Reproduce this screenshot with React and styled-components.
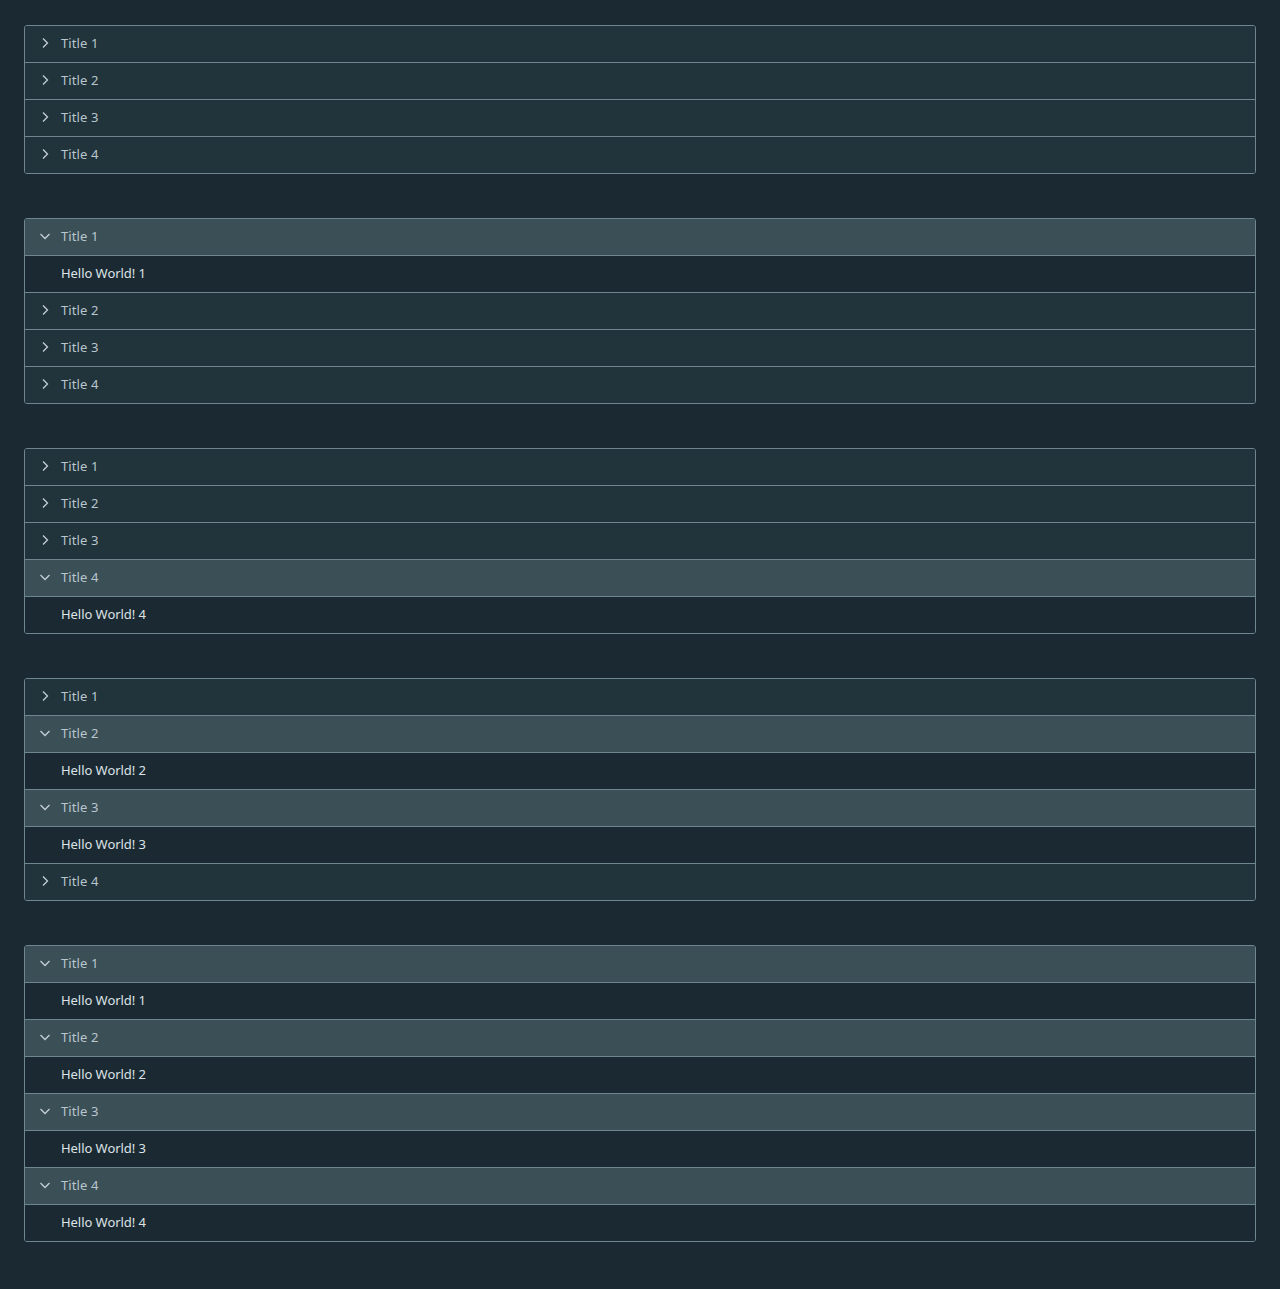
import React from "react";
import styled, { createGlobalStyle } from "styled-components";

const Global = createGlobalStyle`
  html, body { margin: 0; padding: 0; background: #1b2a32; }
  body { font-family: "Noto Sans", "Open Sans", sans-serif; }
`;

const Page = styled.div`
  padding: 25px 24px 48px;
  display: flex;
  flex-direction: column;
  gap: 44px;
`;

const Accordion = styled.div`
  border: 1px solid #6f858f;
  border-radius: 3px;
  overflow: hidden;
  display: flex;
  flex-direction: column;
`;

const Panel = styled.div`
  & + & { border-top: 1px solid #6f858f; }
`;

const Header = styled.div`
  height: 36px;
  box-sizing: border-box;
  padding-bottom: 2px;
  display: flex;
  align-items: center;
  background: ${(p) => (p.$open ? "#3b4f57" : "#21333b")};
  color: #b9c6cd;
  font-size: 13px;
  letter-spacing: 0.1px;
`;

const IconBox = styled.span`
  width: 16px;
  height: 16px;
  margin-left: 12px;
  margin-right: 8px;
  display: flex;
  align-items: center;
  justify-content: center;
  color: #c4d0d6;
`;

const Content = styled.div`
  height: 37px;
  box-sizing: border-box;
  padding: 0 0 2px 36px;
  display: flex;
  align-items: center;
  border-top: 1px solid #6f858f;
  background: #1b2a32;
  color: #dde3e6;
  font-size: 13px;
  letter-spacing: -0.05px;
`;

const Chevron = ({ open }) => (
  <svg width="16" height="16" viewBox="0 0 16 16" fill="none">
    {open ? (
      <path d="M3.5 6 L8 10.5 L12.5 6" stroke="currentColor" strokeWidth="1.3" />
    ) : (
      <path d="M6 3.5 L10.5 8 L6 12.5" stroke="currentColor" strokeWidth="1.3" />
    )}
  </svg>
);

const groups = [
  [],
  [1],
  [4],
  [2, 3],
  [1, 2, 3, 4],
];

export default function App() {
  return (
    <>
      <Global />
      <Page>
        {groups.map((openList, gi) => (
          <Accordion key={gi}>
            {[1, 2, 3, 4].map((n) => {
              const open = openList.includes(n);
              return (
                <Panel key={n}>
                  <Header $open={open}>
                    <IconBox>
                      <Chevron open={open} />
                    </IconBox>
                    Title {n}
                  </Header>
                  {open && <Content>Hello World! {n}</Content>}
                </Panel>
              );
            })}
          </Accordion>
        ))}
      </Page>
    </>
  );
}
